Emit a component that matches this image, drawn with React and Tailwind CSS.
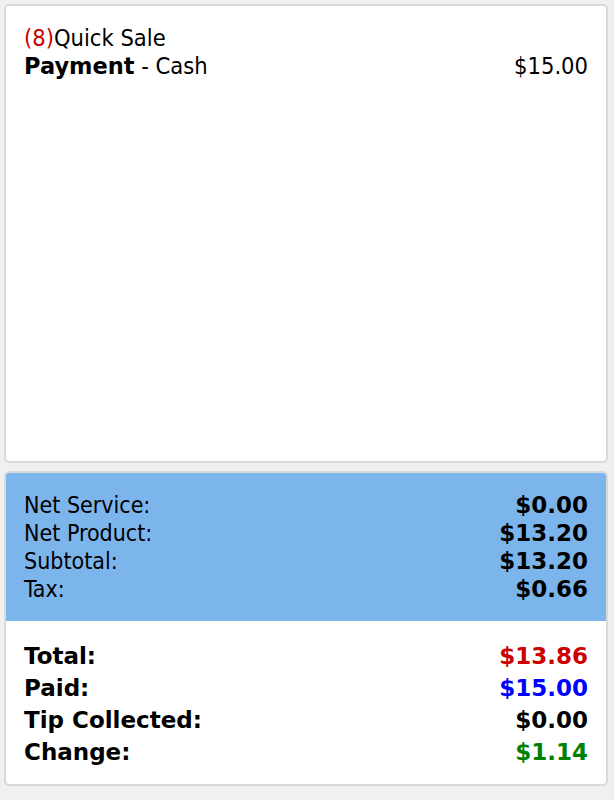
import React from "react";

const font = { fontFamily: '"DejaVu Sans Condensed", "DejaVu Sans", sans-serif' };

function Bold({ children, className = "" }) {
  return (
    <span className={"font-bold font-['DejaVu_Sans',sans-serif] " + className}>
      {children}
    </span>
  );
}

function Row({ label, value, boldLabel = false, boldValue = false, valueClass = "" }) {
  return (
    <div className="flex justify-between">
      {boldLabel ? <Bold>{label}</Bold> : <span>{label}</span>}
      {boldValue ? <Bold className={valueClass}>{value}</Bold> : <span className={valueClass}>{value}</span>}
    </div>
  );
}

export default function App() {
  return (
    <div
      className="w-[614px] h-[800px] bg-[#f0f0f0] pl-[4px] pr-[6px] pt-[4px] flex flex-col gap-[8px] text-[23.5px] text-black font-['DejaVu_Sans_Condensed','DejaVu_Sans',sans-serif]"
      style={font}
    >
      <div className="h-[459px] bg-white border-2 border-[#d9d9d9] rounded-[5px] pl-[18px] pr-[18px] pt-[18px] leading-[28px]">
        <div>
          <span className="text-[#cc0000]">(8)</span>
          <span>Quick Sale</span>
        </div>
        <div className="flex justify-between">
          <span>
            <Bold className="text-[22.5px]">Payment</Bold> - Cash
          </span>
          <span>$15.00</span>
        </div>
      </div>

      <div className="h-[315px] bg-white border-2 border-[#d9d9d9] rounded-[5px] overflow-hidden flex flex-col">
        <div className="bg-[#7cb5ec] pl-[18px] pr-[18px] pt-[18px] pb-[18px] leading-[28px] text-[23px]">
          <Row label="Net Service:" value="$0.00" boldValue />
          <Row label="Net Product:" value="$13.20" boldValue />
          <Row label="Subtotal:" value="$13.20" boldValue />
          <Row label="Tax:" value="$0.66" boldValue />
        </div>
        <div className="pl-[18px] pr-[18px] pt-[19px] leading-[32px] text-[23px]">
          <Row label="Total:" value="$13.86" boldLabel boldValue valueClass="text-[#cc0000]" />
          <Row label="Paid:" value="$15.00" boldLabel boldValue valueClass="text-[#0000ff]" />
          <Row label="Tip Collected:" value="$0.00" boldLabel boldValue />
          <Row label="Change:" value="$1.14" boldLabel boldValue valueClass="text-[#008000]" />
        </div>
      </div>
    </div>
  );
}
